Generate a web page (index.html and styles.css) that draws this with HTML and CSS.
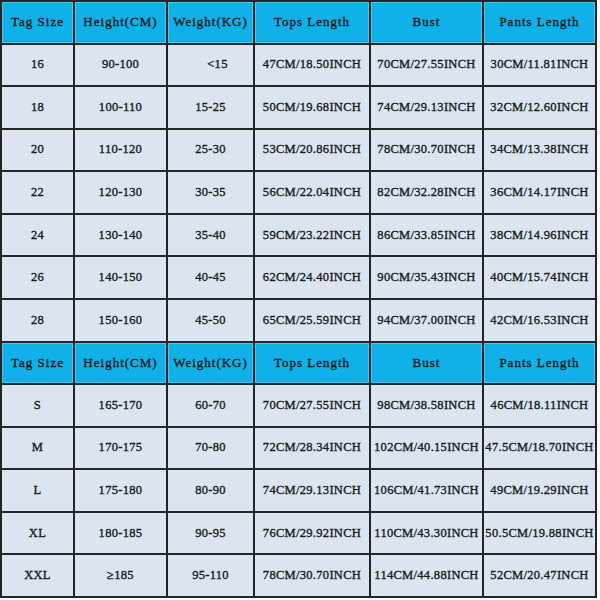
FILE: index.html
```html
<!DOCTYPE html>
<html>
<head>
<meta charset="utf-8">
<link rel="stylesheet" href="styles.css">
</head>
<body>
<div class="chart">
  <div class="cell head">Tag Size</div><div class="cell head">Height(CM)</div><div class="cell head">Weight(KG)</div><div class="cell head">Tops Length</div><div class="cell head">Bust</div><div class="cell head">Pants Length</div>
  <div class="cell">16</div><div class="cell">90-100</div><div class="cell shift">&lt;15</div><div class="cell">47CM/18.50INCH</div><div class="cell">70CM/27.55INCH</div><div class="cell">30CM/11.81INCH</div>
  <div class="cell">18</div><div class="cell">100-110</div><div class="cell">15-25</div><div class="cell">50CM/19.68INCH</div><div class="cell">74CM/29.13INCH</div><div class="cell">32CM/12.60INCH</div>
  <div class="cell">20</div><div class="cell">110-120</div><div class="cell">25-30</div><div class="cell">53CM/20.86INCH</div><div class="cell">78CM/30.70INCH</div><div class="cell">34CM/13.38INCH</div>
  <div class="cell">22</div><div class="cell">120-130</div><div class="cell">30-35</div><div class="cell">56CM/22.04INCH</div><div class="cell">82CM/32.28INCH</div><div class="cell">36CM/14.17INCH</div>
  <div class="cell">24</div><div class="cell">130-140</div><div class="cell">35-40</div><div class="cell">59CM/23.22INCH</div><div class="cell">86CM/33.85INCH</div><div class="cell">38CM/14.96INCH</div>
  <div class="cell">26</div><div class="cell">140-150</div><div class="cell">40-45</div><div class="cell">62CM/24.40INCH</div><div class="cell">90CM/35.43INCH</div><div class="cell">40CM/15.74INCH</div>
  <div class="cell">28</div><div class="cell">150-160</div><div class="cell">45-50</div><div class="cell">65CM/25.59INCH</div><div class="cell">94CM/37.00INCH</div><div class="cell">42CM/16.53INCH</div>
  <div class="cell head">Tag Size</div><div class="cell head">Height(CM)</div><div class="cell head">Weight(KG)</div><div class="cell head">Tops Length</div><div class="cell head">Bust</div><div class="cell head">Pants Length</div>
  <div class="cell">S</div><div class="cell">165-170</div><div class="cell">60-70</div><div class="cell">70CM/27.55INCH</div><div class="cell">98CM/38.58INCH</div><div class="cell">46CM/18.11INCH</div>
  <div class="cell">M</div><div class="cell">170-175</div><div class="cell">70-80</div><div class="cell">72CM/28.34INCH</div><div class="cell">102CM/40.15INCH</div><div class="cell">47.5CM/18.70INCH</div>
  <div class="cell">L</div><div class="cell">175-180</div><div class="cell">80-90</div><div class="cell">74CM/29.13INCH</div><div class="cell">106CM/41.73INCH</div><div class="cell">49CM/19.29INCH</div>
  <div class="cell">XL</div><div class="cell">180-185</div><div class="cell">90-95</div><div class="cell">76CM/29.92INCH</div><div class="cell">110CM/43.30INCH</div><div class="cell">50.5CM/19.88INCH</div>
  <div class="cell">XXL</div><div class="cell">≥185</div><div class="cell">95-110</div><div class="cell">78CM/30.70INCH</div><div class="cell">114CM/44.88INCH</div><div class="cell">52CM/20.47INCH</div>
</div>
</body>
</html>
```
FILE: styles.css
```css
html, body {
  margin: 0;
  padding: 0;
  background: #ffffff;
}

.chart {
  display: grid;
  grid-template-columns: 71px 91px 85px 114px 111px 111px;
  grid-template-rows: repeat(14, 1fr);
  gap: 2px;
  padding: 2px;
  width: 597px;
  height: 598px;
  box-sizing: border-box;
  background: #252525;
  font-family: "Liberation Serif", "DejaVu Serif", serif;
  font-weight: normal;
  font-size: 12.5px;
  color: #1a1a1a;
  -webkit-text-stroke: 0.35px #1a1a1a;
}

.cell {
  display: flex;
  align-items: center;
  justify-content: center;
  background: #dce5ef;
  white-space: nowrap;
  letter-spacing: 0.3px;
}

.head {
  background: #10b1e9;
  box-shadow: inset 0 0 0 1px #4cc4ee;
  font-size: 13px;
  letter-spacing: 1px;
}

.shift {
  padding-left: 14px;
}
```
